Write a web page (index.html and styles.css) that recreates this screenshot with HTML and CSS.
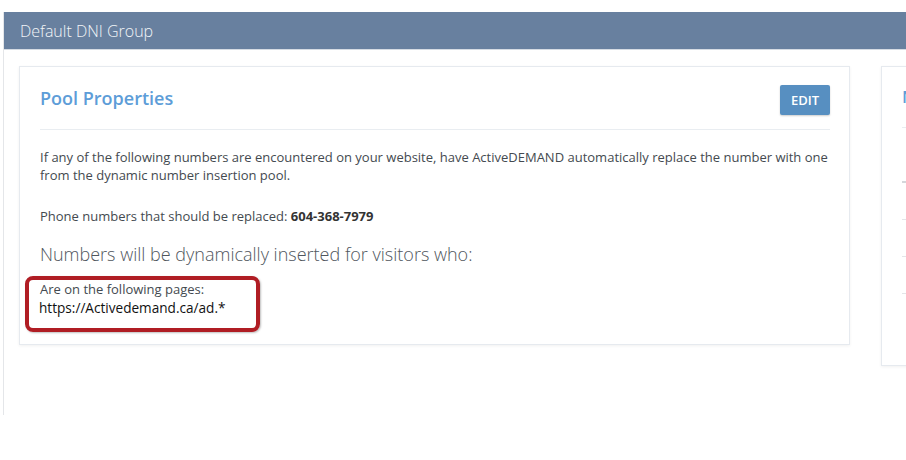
FILE: index.html
```html
<!DOCTYPE html>
<html>
<head>
<meta charset="utf-8">
<title>Default DNI Group</title>
<link rel="stylesheet" href="styles.css">
</head>
<body>
<div class="wrapper">
  <div class="group-header">Default DNI Group</div>
  <div class="group-body">
    <section class="card main-card">
      <div class="card-head">
        <h2 class="card-title">Pool Properties</h2>
        <button class="btn-edit">EDIT</button>
      </div>
      <hr class="divider">
      <p class="text intro">If any of the following numbers are encountered on your website, have ActiveDEMAND automatically replace the number with one from the dynamic number insertion pool.</p>
      <p class="text phone">Phone numbers that should be replaced: <strong>604-368-7979</strong></p>
      <h3 class="subhead">Numbers will be dynamically inserted for visitors who:</h3>
      <div class="rule">
        <div class="text rule-label">Are on the following pages:</div>
        <div class="rule-url">https://Activedemand.ca/ad.*</div>
        <div class="annotation"></div>
      </div>
    </section>
    <section class="card side-card">
      <div class="side-head"><h2 class="side-title">N</h2></div>
      <hr class="divider">
      <div class="side-row side-row-head"></div>
      <div class="side-row"></div>
      <div class="side-row"></div>
      <div class="side-row"></div>
    </section>
  </div>
</div>
</body>
</html>
```

FILE: styles.css
```css
html, body {
  margin: 0;
  padding: 0;
  overflow: hidden;
  background: #ffffff;
  font-family: "Open Sans", "Noto Sans", sans-serif;
}

.wrapper {
  margin: 12px 0 0 3px;
  border-left: 1px solid #e4e6e9;
  width: 1200px;
}

.group-header {
  height: 38px;
  background: #68809f;
  color: #f2f5f8;
  font-size: 16px;
  font-weight: 300;
  display: flex;
  align-items: center;
  padding-left: 16px;
  border-bottom: 1px solid #d5dbe3;
  box-sizing: border-box;
}

.group-body {
  height: 365px;
  box-sizing: border-box;
  padding: 16px 0 0 15px;
  display: flex;
  align-items: flex-start;
  gap: 31px;
}

.card {
  background: #ffffff;
  border: 1px solid #e6eaef;
  box-shadow: 0 1px 3px rgba(0, 0, 0, 0.06);
  box-sizing: border-box;
}

.main-card {
  width: 831px;
  padding: 18px 19px 26px 20px;
}

.card-head {
  display: flex;
  justify-content: space-between;
  align-items: flex-start;
  height: 30px;
}

.card-title {
  margin: 0;
  font-size: 18px;
  line-height: 26px;
  font-weight: 600;
  color: #5d9dd8;
}

.btn-edit {
  width: 50px;
  height: 30px;
  border: none;
  border-radius: 2px;
  background: #578fc1;
  color: #ffffff;
  font-family: "Open Sans", "Noto Sans", sans-serif;
  font-size: 13px;
  font-weight: 600;
  padding: 0;
  box-shadow: 0 1px 2px rgba(0, 0, 0, 0.2);
}

.divider {
  margin: 14px 0 0 0;
  border: none;
  border-top: 1px solid #e9edf1;
  height: 0;
}

.text {
  font-size: 13px;
  line-height: 18px;
  color: #444a50;
}

.intro {
  margin: 18px 0 0 0;
}

.phone {
  margin: 22.5px 0 0 0;
}

.phone strong {
  font-weight: 700;
  color: #333333;
}

.subhead {
  margin: 16.5px 0 0 0;
  font-size: 18px;
  line-height: 26px;
  font-weight: 300;
  color: #4f565d;
}

.rule {
  position: relative;
  margin-top: 12.5px;
}

.rule-label {
  line-height: 18px;
}

.rule-url {
  font-size: 13.6px;
  line-height: 20px;
  color: #111111;
  margin-left: -1px;
}

.annotation {
  position: absolute;
  left: -15px;
  top: -4px;
  width: 235px;
  height: 56px;
  box-sizing: border-box;
  border: 4.5px solid #b01d24;
  border-radius: 8px;
  box-shadow: 1px 1px 2px rgba(0, 0, 0, 0.25);
}

.side-card {
  width: 320px;
  height: 300px;
  padding: 18px 20px 0 20px;
}

.side-head {
  height: 42px;
}

.side-title {
  margin: 0;
  font-size: 17px;
  line-height: 24px;
  font-weight: 600;
  color: #5d9dd8;
}

.side-card .divider {
  margin-top: 0;
}

.side-row {
  height: 36px;
  border-bottom: 1px solid #e3e5e8;
}

.side-row-head {
  height: 53px;
  border-bottom: 2px solid #d4d7db;
}
```
